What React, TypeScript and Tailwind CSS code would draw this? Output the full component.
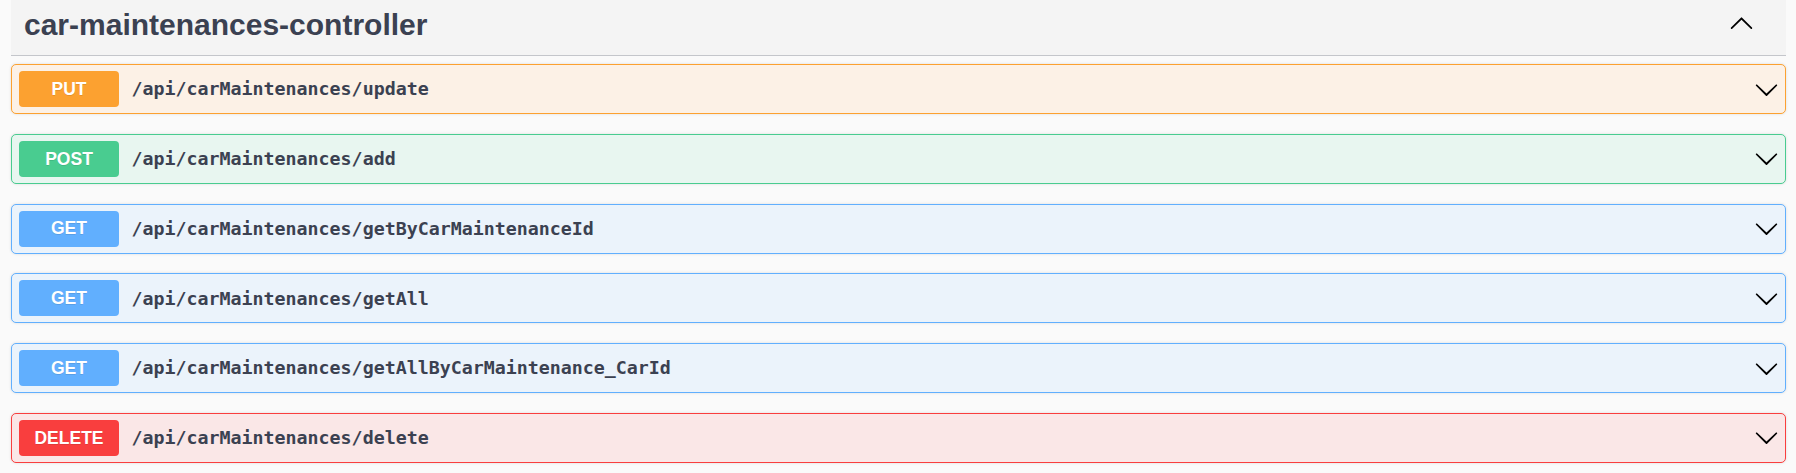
import React from "react";

type Op = { method: string; path: string; color: string; bg: string; border: string };

const ops: Op[] = [
  { method: "PUT", path: "/api/carMaintenances/update", color: "bg-[#fca130]", bg: "bg-[#fcf1e6]", border: "border-[#fca130]" },
  { method: "POST", path: "/api/carMaintenances/add", color: "bg-[#49cc90]", bg: "bg-[#e8f6f0]", border: "border-[#49cc90]" },
  { method: "GET", path: "/api/carMaintenances/getByCarMaintenanceId", color: "bg-[#61affe]", bg: "bg-[#ebf3fb]", border: "border-[#61affe]" },
  { method: "GET", path: "/api/carMaintenances/getAll", color: "bg-[#61affe]", bg: "bg-[#ebf3fb]", border: "border-[#61affe]" },
  { method: "GET", path: "/api/carMaintenances/getAllByCarMaintenance_CarId", color: "bg-[#61affe]", bg: "bg-[#ebf3fb]", border: "border-[#61affe]" },
  { method: "DELETE", path: "/api/carMaintenances/delete", color: "bg-[#f93e3e]", bg: "bg-[#fae7e7]", border: "border-[#f93e3e]" },
];

const Down = () => (
  <svg width="25" height="25" viewBox="0 0 20 20" className="shrink-0">
    <path
      fill="#000"
      d="M17.418 6.109c.272-.268.709-.268.979 0s.271.701 0 .969l-7.908 7.83c-.27.268-.707.268-.979 0l-7.908-7.83c-.27-.268-.27-.701 0-.969.271-.268.709-.268.979 0L10 13.25l7.418-7.141z"
    />
  </svg>
);

const Up = () => (
  <svg width="25" height="25" viewBox="0 0 20 20" className="shrink-0">
    <path
      fill="#000"
      d="M17.418 14.908c.272.268.709.268.979 0s.271-.701 0-.969l-7.908-7.83a.697.697 0 0 0-.979 0l-7.908 7.83c-.27.268-.27.701 0 .969.271.268.709.268.979 0L10 7.741l7.418 7.167z"
    />
  </svg>
);

export default function App() {
  return (
    <div className="min-h-screen bg-[#fafafa] pl-[11px] pr-[10px] text-[#3b4151]">
      <div className="flex h-[56px] items-start justify-between border-b border-[#c4c6cb] bg-[#f4f4f4]">
        <h3 className="ml-[13px] mt-[10px] text-[30px] font-bold leading-[30px] [font-family:'Liberation_Sans',Arial,sans-serif]">
          car-maintenances-controller
        </h3>
        <div className="mr-[32px] mt-[10px]">
          <Up />
        </div>
      </div>
      <div className="mt-[8px] flex flex-col gap-[19.8px]">
        {ops.map((op, i) => (
          <div
            key={i}
            className={`flex h-[50px] items-center rounded-[5px] border ${op.border} ${op.bg} pl-[7px] pr-[6px] shadow-[0_0_3px_rgba(0,0,0,0.12)]`}
          >
            <div
              className={`flex h-[36px] w-[100px] shrink-0 items-center justify-center rounded-[4px] ${op.color} text-[17.5px] font-bold text-white [font-family:'Liberation_Sans',Arial,sans-serif] [text-shadow:0_1px_0_rgba(0,0,0,0.1)]`}
            >
              {op.method}
            </div>
            <div className="ml-[12.5px] flex-1 text-[18.3px] font-bold text-[#3b4151] [font-family:'DejaVu_Sans_Mono',monospace]">
              {op.path}
            </div>
            <Down />
          </div>
        ))}
      </div>
    </div>
  );
}
